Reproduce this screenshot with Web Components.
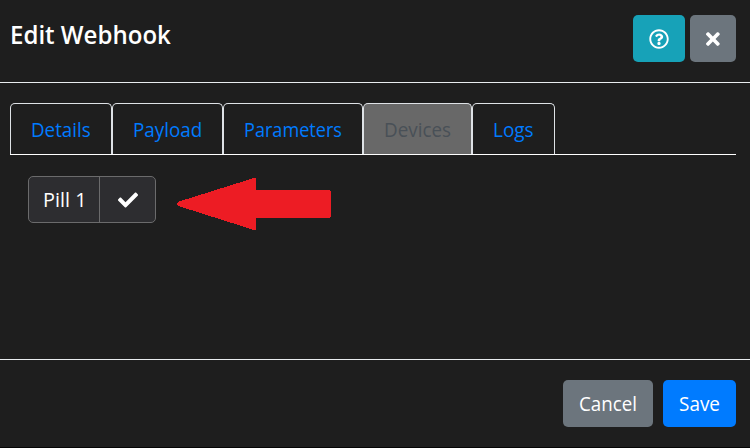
<!DOCTYPE html>
<html lang="en">
<head>
<meta charset="utf-8">
<title>Edit Webhook</title>
<style>
html,body{margin:0;height:100%}
body{background:#1e1e1e;color:#fff;font:19.4px/30px "Open Sans","Noto Sans",sans-serif;overflow:hidden}
</style>
</head>
<body>
<webhook-dialog></webhook-dialog>
<script>
// Text set to a fixed advance width
customElements.define('fit-text', class extends HTMLElement {
  connectedCallback() {
    const r = this.attachShadow({mode: 'open'});
    r.innerHTML = `<style>:host{display:block;white-space:nowrap;width:${this.getAttribute('w')}px}
      span{display:inline-block;transform-origin:0 50%}</style><span><slot></slot></span>`;
    const s = r.querySelector('span');
    s.style.transform = `scaleX(${this.getAttribute('w') / s.offsetWidth})`;
  }
});

const ICONS = {
  question: [512, 'M256 8C119.043 8 8 119.083 8 256c0 136.997 111.043 248 248 248s248-111.003 248-248C504 119.083 392.957 8 256 8zm0 448c-110.532 0-200-89.431-200-200 0-110.495 89.472-200 200-200 110.491 0 200 89.471 200 200 0 110.53-89.431 200-200 200zm107.244-255.2c0 67.052-72.421 68.084-72.421 92.863V300c0 6.627-5.373 12-12 12h-45.647c-6.627 0-12-5.373-12-12v-8.659c0-35.745 27.1-50.034 47.579-61.516 17.561-9.845 28.324-16.541 28.324-29.579 0-17.246-21.999-28.693-39.784-28.693-23.189 0-33.894 10.977-48.942 29.969-4.057 5.12-11.46 6.071-16.666 2.124l-27.824-21.098c-5.107-3.872-6.251-11.066-2.644-16.363C184.846 131.491 214.94 112 261.794 112c49.071 0 101.45 38.304 101.45 88.8zM298 368c0 23.159-18.841 42-42 42s-42-18.841-42-42 18.841-42 42-42 42 18.841 42 42z'],
  times: [352, 'M242.72 256l100.07-100.07c12.28-12.28 12.28-32.19 0-44.48l-22.24-22.24c-12.28-12.28-32.19-12.28-44.48 0L176 189.28 75.93 89.21c-12.28-12.28-32.19-12.28-44.48 0L9.21 111.45c-12.28 12.28-12.28 32.19 0 44.48L109.28 256 9.21 356.07c-12.28 12.28-12.28 32.19 0 44.48l22.24 22.24c12.28 12.28 32.2 12.28 44.48 0L176 322.72l100.07 100.07c12.28 12.28 32.2 12.28 44.48 0l22.24-22.24c12.28-12.28 12.28-32.19 0-44.48L242.72 256z'],
  check: [512, 'M173.898 439.404l-166.4-166.4c-9.997-9.997-9.997-26.206 0-36.204l36.203-36.204c9.997-9.998 26.207-9.998 36.204 0L192 312.69 432.095 72.596c9.997-9.997 26.207-9.997 36.204 0l36.203 36.204c9.997 9.997 9.997 26.206 0 36.204l-294.4 294.401c-9.998 9.997-26.207 9.997-36.204-.001z']
};
customElements.define('ui-icon', class extends HTMLElement {
  connectedCallback() {
    const [w, d] = ICONS[this.getAttribute('name')];
    this.attachShadow({mode: 'open'}).innerHTML = `<style>:host{display:block}svg{display:block;height:20px;width:${w / 25.6}px}</style>
      <svg viewBox="0 0 ${w} 512" fill="currentColor"><path d="${d}"/></svg>`;
  }
});

customElements.define('ui-button', class extends HTMLElement {
  connectedCallback() {
    this.attachShadow({mode: 'open'}).innerHTML = `<style>
      :host{display:block}
      button{display:flex;align-items:center;box-sizing:border-box;height:47px;padding:0 16px;border:0;border-radius:5px;background:#6c757d;color:#fff;font:inherit}
      :host([kind=info]) button{background:#17a2b8}
      :host([kind=primary]) button{background:#007bff}
      </style><button><slot></slot></button>`;
  }
});

customElements.define('nav-tab', class extends HTMLElement {
  connectedCallback() {
    this.attachShadow({mode: 'open'}).innerHTML = `<style>
      :host{display:block;box-sizing:border-box;height:51px;padding:11px 20px 0;border:1px solid #dee2e6;border-bottom:0;border-radius:5px 5px 0 0;color:#007bff}
      :host([active]){background:#686868;color:#495057}
      </style><slot></slot>`;
  }
});

customElements.define('device-pill', class extends HTMLElement {
  connectedCallback() {
    this.attachShadow({mode: 'open'}).innerHTML = `<style>
      :host{display:flex;box-sizing:border-box;width:128px;height:47px;border:1px solid #6b6b6c;border-radius:5px;background:#2d2d30}
      .name{box-sizing:border-box;width:71px;padding:8px 0 0 14px;border-right:1px solid #6b6b6c}
      .mark{flex:1;display:flex;align-items:center;justify-content:center}
      </style><div class="name"><slot></slot></div><div class="mark"><ui-icon name="check"></ui-icon></div>`;
  }
});

customElements.define('red-arrow', class extends HTMLElement {
  connectedCallback() {
    this.attachShadow({mode: 'open'}).innerHTML = `<style>:host{display:block}svg{display:block}</style>
      <svg width="154" height="52" viewBox="0 0 154 52" shape-rendering="crispEdges"><path fill="#ed1c24" d="M0 25L2 23.5L76 0.3L79 0V12H152.4L154 13.6V38.4L152.4 40H79V52H77L3 28.5L0 27Z"/></svg>`;
  }
});

customElements.define('webhook-dialog', class extends HTMLElement {
  connectedCallback() {
    this.attachShadow({mode: 'open'}).innerHTML = `<style>
      :host{display:flex;flex-direction:column;box-sizing:border-box;height:448px;border-bottom:1px solid #050505}
      header{display:flex;align-items:flex-start;box-sizing:border-box;height:83px;padding:15px 14px 0 10px;gap:5px;border-bottom:1px solid #e9ecef}
      h1{flex:1;margin:2px 0 0;font-size:24.5px;line-height:36px;font-weight:600}
      nav{display:flex;margin:20px 14px 0 10px;border-bottom:1px solid #fff}
      main{flex:1}
      .row{display:flex;gap:21px;margin:21px 28px 0}
      red-arrow{margin-top:2px}
      footer{display:flex;justify-content:flex-end;box-sizing:border-box;height:88px;padding:20px 14px 0;gap:10px;border-top:1px solid #e9ecef}
      </style>
      <header><h1><fit-text w="161">Edit Webhook</fit-text></h1>
        <ui-button kind="info"><ui-icon name="question"></ui-icon></ui-button>
        <ui-button><ui-icon name="times"></ui-icon></ui-button></header>
      <main>
        <nav>
          <nav-tab><fit-text w="60">Details</fit-text></nav-tab>
          <nav-tab><fit-text w="69">Payload</fit-text></nav-tab>
          <nav-tab><fit-text w="98">Parameters</fit-text></nav-tab>
          <nav-tab active><fit-text w="67">Devices</fit-text></nav-tab>
          <nav-tab><fit-text w="41">Logs</fit-text></nav-tab>
        </nav>
        <div class="row"><device-pill><fit-text w="43">Pill 1</fit-text></device-pill><red-arrow></red-arrow></div>
      </main>
      <footer>
        <ui-button><fit-text w="58">Cancel</fit-text></ui-button>
        <ui-button kind="primary"><fit-text w="41">Save</fit-text></ui-button>
      </footer>`;
  }
});
</script>
</body>
</html>
